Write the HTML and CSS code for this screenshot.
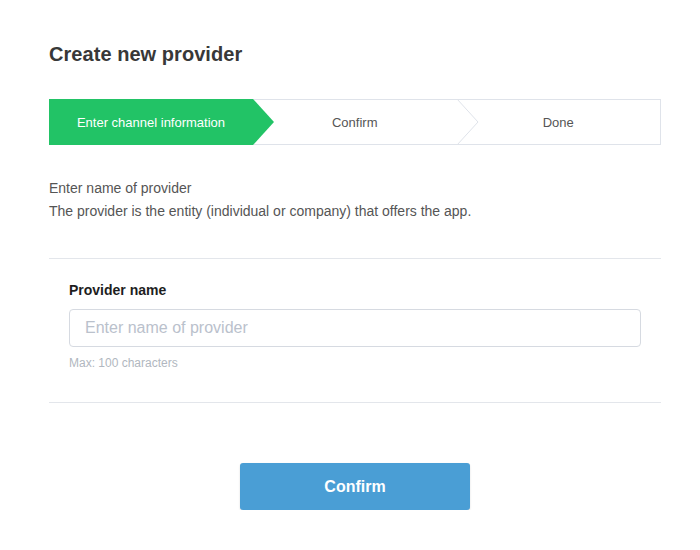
FILE: index.html
```html
<!DOCTYPE html>
<html lang="en">
<head>
<meta charset="utf-8">
<title>Create new provider</title>
<link rel="stylesheet" href="styles.css">
</head>
<body>
<main class="page">
  <h1 class="title">Create new provider</h1>
  <ol class="steps">
    <li class="step step-active">Enter channel information</li>
    <li class="step step-chevron">Confirm
      <svg class="chevron" width="22" height="46" viewBox="0 0 22 46" aria-hidden="true"><polyline points="0,0 21,23 0,46" fill="none" stroke="#dfe3ea" stroke-width="1"/></svg>
    </li>
    <li class="step">Done</li>
  </ol>
  <div class="intro">
    <p>Enter name of provider</p>
    <p>The provider is the entity (individual or company) that offers the app.</p>
  </div>
  <section class="form-section">
    <label class="label" for="pname">Provider name</label>
    <input class="input" id="pname" type="text" placeholder="Enter name of provider">
    <div class="hint">Max: 100 characters</div>
  </section>
  <div class="actions">
    <button class="btn" type="button">Confirm</button>
  </div>
</main>
</body>
</html>
```
FILE: styles.css
```css
* { box-sizing: border-box; }
html, body { margin: 0; padding: 0; background: #fff; }
body { font-family: "Liberation Sans", Arial, Helvetica, sans-serif; color: #555; }
.page { width: 612px; margin-left: 49px; padding-top: 40px; }
.title { margin: 0; font-size: 20px; line-height: 28px; font-weight: bold; color: #383838; letter-spacing: 0.05px; }
.steps {
  list-style: none; margin: 31px 0 0; padding: 0;
  display: flex; height: 46px; border: 1px solid #dfe3ea;
}
.step {
  flex: 1; position: relative; display: flex; align-items: center; justify-content: center;
  font-size: 13px; color: #555;
}
.step-active { background: #22c366; color: #fff; margin: -1px 0 -1px -1px; flex: 0 0 204px; }
.step-active::after {
  content: ""; position: absolute; left: 100%; top: 0; width: 21px; height: 100%;
  background: #22c366; clip-path: polygon(0 0, 100% 50%, 0 100%);
  z-index: 2;
}
.step-chevron .chevron { position: absolute; left: 100%; top: -1px; z-index: 1; }
.intro { margin-top: 32px; font-size: 14px; line-height: 23px; color: #555; }
.intro p { margin: 0; }
.form-section {
  margin-top: 35px; border-top: 1px solid #e3e6eb; border-bottom: 1px solid #e3e6eb;
  padding: 21px 20px 31px; display: flex; flex-direction: column;
}
.label { font-size: 14px; line-height: 20px; font-weight: bold; color: #1e1e1e; }
.input {
  margin-top: 9px; height: 38px; border: 1px solid #d6dae1; border-radius: 4px;
  padding: 0 15px; font-family: inherit; font-size: 16px; color: #333; outline: none;
}
.input::placeholder { color: #bac1cc; }
.hint { margin-top: 8px; font-size: 12px; line-height: 16px; color: #b1b7c0; }
.actions { display: flex; justify-content: center; margin-top: 60px; }
.btn {
  width: 230px; height: 47px; border: 0; border-radius: 3px; background: #4a9ed5;
  color: #fff; font-family: inherit; font-size: 16px; font-weight: bold;
  box-shadow: 0 1px 2px rgba(0,0,0,0.15); cursor: pointer;
}
```
